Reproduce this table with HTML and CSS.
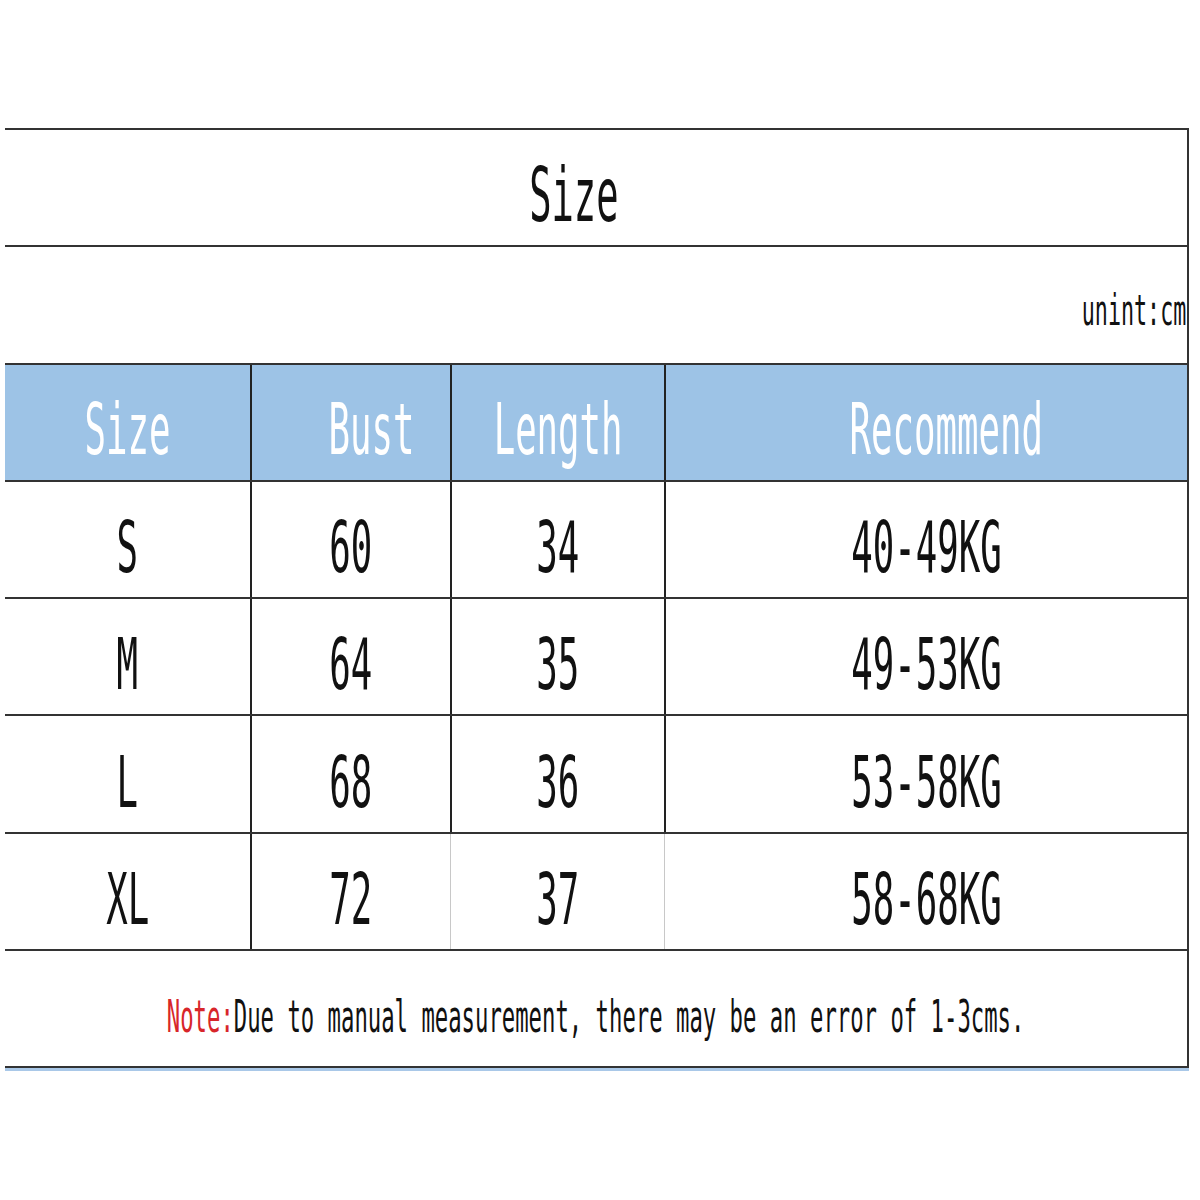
FILE: index.html
```html
<!DOCTYPE html>
<html>
<head>
<meta charset="utf-8">
<link rel="stylesheet" href="styles.css">
</head>
<body>
<div class="sheet">
  <div class="row title-row"><span class="t big title">Size</span></div>
  <div class="row unit-row"><span class="t small unit">unint:cm</span></div>
  <div class="row grid head">
    <div class="cell"><span class="t big">Size</span></div>
    <div class="cell"><span class="t big shift">Bust</span></div>
    <div class="cell"><span class="t big">Length</span></div>
    <div class="cell"><span class="t big shift2">Recommend</span></div>
  </div>
  <div class="row grid">
    <div class="cell"><span class="t big">S</span></div>
    <div class="cell"><span class="t big">60</span></div>
    <div class="cell"><span class="t big">34</span></div>
    <div class="cell"><span class="t big">40-49KG</span></div>
  </div>
  <div class="row grid">
    <div class="cell"><span class="t big">M</span></div>
    <div class="cell"><span class="t big">64</span></div>
    <div class="cell"><span class="t big">35</span></div>
    <div class="cell"><span class="t big">49-53KG</span></div>
  </div>
  <div class="row grid">
    <div class="cell"><span class="t big">L</span></div>
    <div class="cell"><span class="t big">68</span></div>
    <div class="cell"><span class="t big">36</span></div>
    <div class="cell"><span class="t big">53-58KG</span></div>
  </div>
  <div class="row grid last">
    <div class="cell"><span class="t big">XL</span></div>
    <div class="cell"><span class="t big">72</span></div>
    <div class="cell light"><span class="t big">37</span></div>
    <div class="cell light"><span class="t big">58-68KG</span></div>
  </div>
  <div class="row note-row"><span class="t small note"><span class="red">Note:</span>Due to manual measurement, there may be an error of 1-3cms.</span></div>
</div>
</body>
</html>
```
FILE: styles.css
```css
html, body {
  margin: 0;
  padding: 0;
  background: #ffffff;
}
body {
  width: 1200px;
  height: 1200px;
  font-family: "DejaVu Sans Mono", "Liberation Mono", monospace;
  color: #111;
}
.sheet {
  margin: 128px 0 0 5px;
  width: 1184px;
  box-sizing: border-box;
  border-top: 2px solid #333;
  border-right: 2px solid #333;
  box-shadow: 0 3px 0 #a9c8e8;
}
.row {
  height: 117.3px;
  box-sizing: border-box;
  border-bottom: 2px solid #333;
  display: flex;
  align-items: center;
  justify-content: center;
  white-space: nowrap;
  overflow: visible;
}
.t {
  display: inline-block;
  transform: scale(0.7, 1.4);
  transform-origin: center center;
  line-height: 1;
}
.big {
  font-size: 51px;
}
.small {
  font-size: 31px;
}
.note {
  font-size: 31.8px;
}
.title-row {
  padding-top: 16px;
}
.title {
  margin-right: 44px;
  font-size: 53px;
}
.unit-row {
  justify-content: flex-end;
  padding-top: 12px;
  padding-right: 1px;
}
.unit {
  transform-origin: right center;
}
.grid {
  display: grid;
  grid-template-columns: 245px 200px 214px 523px;
  align-items: stretch;
  justify-content: start;
}
.cell {
  display: flex;
  align-items: center;
  justify-content: center;
  padding-top: 16px;
  box-sizing: border-box;
  border-left: 2px solid #222;
}
.cell:first-child {
  border-left: none;
}
.cell.light {
  border-left: 1px solid #c8c8c8;
}
.head {
  background: #9dc3e6;
  color: #ffffff;
}
.head .cell {
  padding-top: 14px;
}
.shift {
  margin-left: 40px;
}
.shift2 {
  margin-left: 40px;
}
.note-row {
  padding-top: 16px;
  border-bottom: 2px solid #333;
}
.red {
  color: #d8262a;
}
```
